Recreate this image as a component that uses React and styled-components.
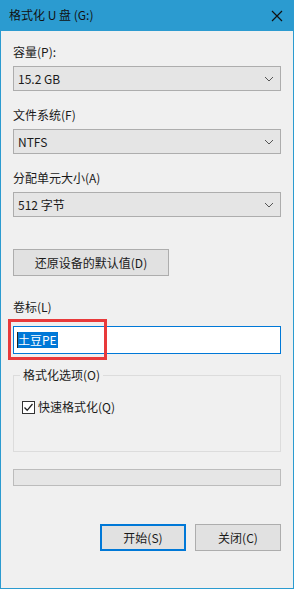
import styled, { createGlobalStyle } from "styled-components";

const GlobalStyle = createGlobalStyle`
  html, body {
    margin: 0;
    padding: 0;
    background: #f0f0f0;
  }
  body {
    font-family: "Microsoft YaHei UI", "Noto Sans CJK SC", "Liberation Sans", sans-serif;
    font-size: 12px;
    color: #1a1a1a;
  }
`;

const Chevron = () => (
  <svg width="10" height="6" viewBox="0 0 10 6">
    <polyline points="1,1 5,5 9,1" fill="none" stroke="#555" strokeWidth="1" />
  </svg>
);

const Select = ({ value, top }) => (
  <SelectBox $top={top}>
    <span>{value}</span>
    <Chevron />
  </SelectBox>
);

const App = () => {
  return (
    <>
      <GlobalStyle />
      <Window>
        <TitleBar>
          <Title>格式化 U 盘 (G:)</Title>
          <CloseIcon width="12" height="12" viewBox="0 0 12 12">
            <path d="M1 1 L11 11 M11 1 L1 11" stroke="#111" strokeWidth="1.2" />
          </CloseIcon>
        </TitleBar>

        <Content>
          <Label $top={13}>容量(P):</Label>
          <Select value="15.2 GB" top={6} />

          <Label $top={16}>文件系统(F)</Label>
          <Select value="NTFS" top={6} />

          <Label $top={16}>分配单元大小(A)</Label>
          <Select value="512 字节" top={6} />

          <Button $top={32} $width={156}>还原设备的默认值(D)</Button>

          <Label $top={23}>卷标(L)</Label>
          <InputWrap>
            <TextInput>
              <Selected>土豆PE</Selected>
            </TextInput>
            <Highlight />
          </InputWrap>

          <GroupBox>
            <GroupLegend>格式化选项(O)</GroupLegend>
            <CheckRow>
              <CheckBox>
                <svg width="11" height="11" viewBox="0 0 11 11">
                  <polyline points="1.5,5.5 4.2,8.3 9.5,2" fill="none" stroke="#222" strokeWidth="1.3" />
                </svg>
              </CheckBox>
              <span>快速格式化(Q)</span>
            </CheckRow>
          </GroupBox>

          <Progress />

          <Footer>
            <Button $width={86} $primary>开始(S)</Button>
            <Button $width={86}>关闭(C)</Button>
          </Footer>
        </Content>
      </Window>
    </>
  );
};

const Window = styled.div`
  width: 294px;
  height: 589px;
  box-sizing: border-box;
  border: 1px solid #2b9bd0;
  border-top: none;
  background: #f0f0f0;
  display: flex;
  flex-direction: column;
`;

const TitleBar = styled.div`
  height: 31px;
  margin: 0 -1px;
  background: #2b9bd0;
  display: flex;
  align-items: center;
  justify-content: space-between;
  padding: 0 11px 0 9px;
`;

const Title = styled.div`
  color: #111;
  font-size: 12px;
  line-height: 16px;
  padding-bottom: 1px;
`;

const CloseIcon = styled.svg`
  display: block;
`;

const Content = styled.div`
  padding: 0 12px;
  display: flex;
  flex-direction: column;
`;

const Label = styled.div`
  margin-top: ${(p) => p.$top}px;
  line-height: 16px;
  height: 16px;
`;

const SelectBox = styled.div`
  margin-top: ${(p) => p.$top}px;
  height: 25px;
  box-sizing: border-box;
  border: 1px solid #adadad;
  background: #e5e5e5;
  display: flex;
  align-items: center;
  justify-content: space-between;
  padding: 0 6px 0 4px;
  line-height: 16px;
`;

const Button = styled.div`
  margin-top: ${(p) => p.$top || 0}px;
  width: ${(p) => p.$width}px;
  height: 27px;
  box-sizing: border-box;
  border: ${(p) => (p.$primary ? "2px solid #0078d7" : "1px solid #adadad")};
  background: #e1e1e1;
  display: flex;
  align-items: center;
  justify-content: center;
  line-height: 16px;
`;

const InputWrap = styled.div`
  position: relative;
  margin-top: 11px;
`;

const TextInput = styled.div`
  height: 28px;
  box-sizing: border-box;
  border: 1px solid #0078d7;
  background: #fff;
  display: flex;
  align-items: center;
  padding-left: 3px;
`;

const Selected = styled.span`
  background: #0078d7;
  color: #fff;
  line-height: 16px;
  padding-right: 1px;
  border-left: 1px solid #222;
`;

const Highlight = styled.div`
  position: absolute;
  left: -5px;
  top: -7px;
  width: 99px;
  height: 41px;
  box-sizing: border-box;
  border: 3px solid #e83a3b;
  pointer-events: none;
`;

const GroupBox = styled.div`
  position: relative;
  margin-top: 21px;
  height: 77px;
  box-sizing: border-box;
  border: 1px solid #dcdcdc;
  padding: 23px 0 0 8px;
`;

const GroupLegend = styled.div`
  position: absolute;
  left: 6px;
  top: -9px;
  padding: 0 3px;
  background: #f0f0f0;
  line-height: 16px;
`;

const CheckRow = styled.div`
  display: flex;
  align-items: center;
  gap: 3px;
  line-height: 16px;
`;

const CheckBox = styled.div`
  width: 13px;
  height: 13px;
  box-sizing: border-box;
  border: 1px solid #333;
  background: #fff;
  display: flex;
  align-items: center;
  justify-content: center;
`;

const Progress = styled.div`
  margin-top: 17px;
  height: 17px;
  box-sizing: border-box;
  border: 1px solid #bcbcbc;
  background: #e6e6e6;
`;

const Footer = styled.div`
  margin-top: 38px;
  display: flex;
  justify-content: flex-end;
  gap: 9px;
`;

export default App;
